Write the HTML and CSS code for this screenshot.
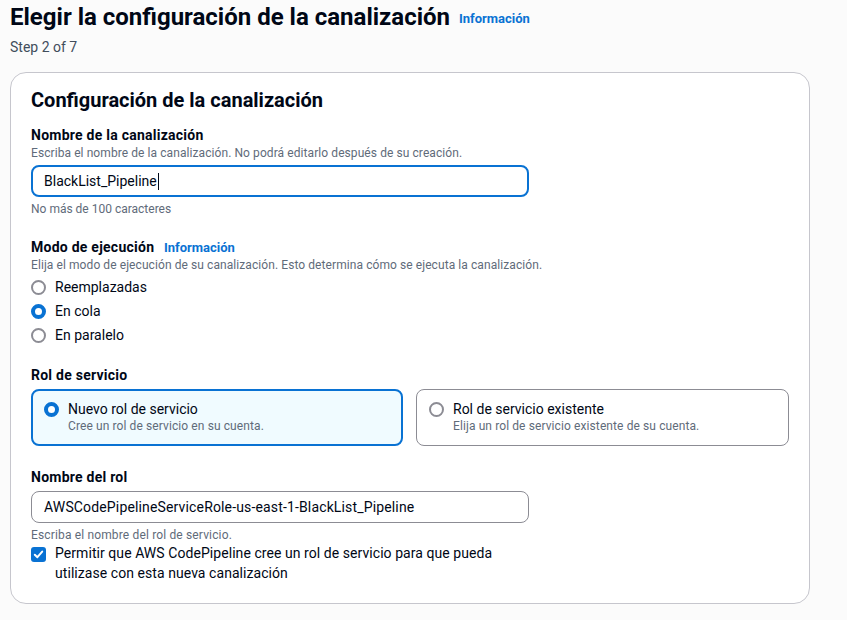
FILE: index.html
```html
<!DOCTYPE html>
<html lang="es">
<head>
<meta charset="utf-8">
<title>Elegir la configuración de la canalización</title>
<link rel="stylesheet" href="styles.css">
</head>
<body>
<div class="page">
  <header class="page-header">
    <h1 class="title">Elegir la configuración de la canalización <a class="info" href="#">Información</a></h1>
    <div class="step">Step 2 of 7</div>
  </header>

  <section class="card">
    <h2 class="card-title">Configuración de la canalización</h2>

    <div class="field field-name">
      <div class="label">Nombre de la canalización</div>
      <div class="desc">Escriba el nombre de la canalización. No podrá editarlo después de su creación.</div>
      <div class="input input-focus"><span class="value">BlackList_Pipeline</span><span class="caret"></span></div>
      <div class="hint">No más de 100 caracteres</div>
    </div>

    <div class="field field-mode">
      <div class="label">Modo de ejecución <a class="info" href="#">Información</a></div>
      <div class="desc">Elija el modo de ejecución de su canalización. Esto determina cómo se ejecuta la canalización.</div>
      <div class="radios">
        <div class="radio-row"><span class="radio"></span><span>Reemplazadas</span></div>
        <div class="radio-row"><span class="radio radio-on"></span><span>En cola</span></div>
        <div class="radio-row"><span class="radio"></span><span>En paralelo</span></div>
      </div>
    </div>

    <div class="field field-role">
      <div class="label">Rol de servicio</div>
      <div class="tiles">
        <div class="tile tile-on">
          <span class="radio radio-on"></span>
          <div class="tile-text">
            <div class="tile-label">Nuevo rol de servicio</div>
            <div class="tile-desc">Cree un rol de servicio en su cuenta.</div>
          </div>
        </div>
        <div class="tile">
          <span class="radio"></span>
          <div class="tile-text">
            <div class="tile-label">Rol de servicio existente</div>
            <div class="tile-desc">Elija un rol de servicio existente de su cuenta.</div>
          </div>
        </div>
      </div>
    </div>

    <div class="field field-rolename">
      <div class="label">Nombre del rol</div>
      <div class="input"><span class="value value-role">AWSCodePipelineServiceRole-us-east-1-BlackList_Pipeline</span></div>
      <div class="hint hint-tight">Escriba el nombre del rol de servicio.</div>
      <div class="check-row">
        <span class="checkbox"><svg viewBox="0 0 15 15" width="15" height="15"><path d="M3.8 7.7 L6.4 10.2 L11.2 4.6" fill="none" stroke="#fff" stroke-width="2" stroke-linecap="round" stroke-linejoin="round"/></svg></span>
        <span class="check-label">Permitir que AWS CodePipeline cree un rol de servicio para que pueda utilizase con esta nueva canalización</span>
      </div>
    </div>
  </section>
</div>
</body>
</html>
```

FILE: styles.css
```css
* { box-sizing: border-box; }
html, body { margin: 0; padding: 0; }
body {
  background: #fbfbfb;
  color: #000716;
  font-family: "Roboto", "Noto Sans", sans-serif;
  font-size: 14px;
}
.page {
  width: 800px;
  padding: 3px 0 0 10px;
}
.title {
  margin: 0;
  font-size: 24px;
  line-height: 28px;
  font-weight: 700;
}
.info {
  color: #0972d3;
  font-size: 13px;
  line-height: 1;
  font-weight: 700;
  text-decoration: none;
  margin-left: 3px;
  vertical-align: 2px;
}
.step {
  margin-top: 8px;
  font-size: 14px;
  line-height: 16px;
  color: #414d5c;
}
.card {
  margin-top: 17px;
  width: 800px;
  background: #ffffff;
  border: 1px solid #c6c6cd;
  border-radius: 16px;
  padding: 15px 20px 20px 20px;
}
.card-title {
  margin: 0;
  font-size: 20px;
  line-height: 24px;
  font-weight: 700;
}
.field-name { margin-top: 14px; }
.field-mode { margin-top: 21px; }
.field-role { margin-top: 19px; }
.field-rolename { margin-top: 22px; }
.label {
  font-size: 14px;
  line-height: 18px;
  font-weight: 700;
  letter-spacing: 0.25px;
}
.label .info { margin-left: 6px; vertical-align: 0; letter-spacing: 0; }
.desc {
  margin-top: 1px;
  font-size: 12px;
  line-height: 16px;
  color: #5f6b7a;
  letter-spacing: 0.08px;
}
.input {
  width: 498px;
  height: 32px;
  margin-top: 5px;
  border: 1px solid #8c8c94;
  border-radius: 8px;
  padding: 0 12px;
  display: flex;
  align-items: center;
  font-size: 14px;
  background: #fff;
}
.input-focus {
  margin-top: 4px;
  border: 2px solid #0972d3;
  padding: 0 11px;
}
.value-role { letter-spacing: 0.15px; }
.caret {
  display: inline-block;
  width: 1px;
  height: 17px;
  background: #000716;
  margin-left: 1px;
}
.hint {
  margin-top: 4px;
  font-size: 12px;
  line-height: 16px;
  color: #5f6b7a;
}
.hint-tight { line-height: 14px; margin-top: 5px; letter-spacing: 0.15px; }
.radios {
  margin-top: 2px;
  display: flex;
  flex-direction: column;
}
.radio-row {
  display: flex;
  align-items: center;
  height: 24px;
  gap: 9px;
}
.radio {
  flex: none;
  width: 15px;
  height: 15px;
  border-radius: 50%;
  border: 2px solid #8c8c94;
  background: #fff;
}
.radio-on {
  border: 4.5px solid #0972d3;
}
.tiles {
  margin-top: 5px;
  display: flex;
  gap: 13px;
}
.tile {
  width: 373px;
  height: 57px;
  border: 1px solid #8c8c94;
  border-radius: 8px;
  padding: 10px 12px 0 12px;
  display: flex;
  align-items: flex-start;
  gap: 9px;
  background: #fff;
}
.tile .radio { margin-top: 2px; }
.tile-on {
  width: 372px;
  border: 2px solid #0972d3;
  background: #f0fbff;
  padding: 9px 11px 0 11px;
}
.tile-label {
  font-size: 14px;
  line-height: 18px;
}
.tile-desc {
  font-size: 12px;
  line-height: 16px;
  color: #5f6b7a;
  letter-spacing: 0.1px;
}
.check-row {
  display: flex;
  align-items: flex-start;
  gap: 9px;
  margin-top: 1px;
}
.checkbox {
  flex: none;
  width: 15px;
  height: 15px;
  margin-top: 4px;
  border-radius: 3px;
  background: #0972d3;
  display: flex;
}
.check-label {
  width: 460px;
  font-size: 14px;
  line-height: 20px;
  letter-spacing: 0.06px;
}
```
